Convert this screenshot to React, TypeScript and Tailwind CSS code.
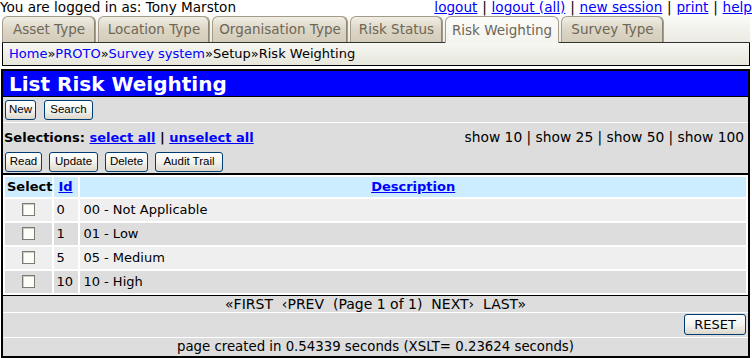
import React from "react";

const Btn = ({ label, w }: { label: string; w: string }) => (
  <div
    className={`${w} h-[20px] flex items-center justify-center rounded-[3px] border border-[#003c74] bg-gradient-to-b from-[#ffffff] via-[#f4f3ee] to-[#dcd8cc] text-[11.5px] text-black font-['Liberation_Sans',sans-serif]`}
  >
    {label}
  </div>
);

const Tab = ({ label, w, active }: { label: string; w: string; active?: boolean }) => (
  <div
    className={
      active
        ? `${w} h-[27px] -mb-[1px] flex items-center justify-center rounded-t-[6px] border border-b-0 border-[#a49c88] bg-gradient-to-b from-[#fbfbf8] to-[#f4f4ef] text-[#6e6656]`
        : `${w} h-[26px] flex items-center justify-center rounded-t-[6px] border border-b-0 border-[#a49c88] shadow-[inset_-1px_0_0_#8d8672] bg-gradient-to-b from-[#f1eee5] via-[#dcd6c6] to-[#d3ccb9] text-[#6e6656]`
    }
  >
    {label}
  </div>
);

const Chk = () => (
  <div className="mx-auto w-[13px] h-[13px] border border-[#7a7a72] bg-[#fcfcf8] shadow-[inset_1px_1px_0_#cfcfc8]" />
);

const Sep = () => <span className="px-[4.8px]">|</span>;

export default function App() {
  const rows = [
    { id: "0", d: "00 - Not Applicable" },
    { id: "1", d: "01 - Low" },
    { id: "5", d: "05 - Medium" },
    { id: "10", d: "10 - High" },
  ];
  return (
    <div className="w-[752px] h-[358px] overflow-hidden bg-white text-[13px] text-black font-['DejaVu_Sans',sans-serif]">
      <div className="h-[16px] leading-[15px] text-[13.6px] flex justify-between whitespace-pre">
        <span>You are logged in as: Tony Marston</span>
        <span>
          <a className="text-[#0000ff] underline">logout</a>
          <Sep />
          <a className="text-[#0000ff] underline">logout (all)</a>
          <Sep />
          <a className="text-[#0000ff] underline">new session</a>
          <Sep />
          <a className="text-[#0000ff] underline">print</a>
          <Sep />
          <a className="text-[#0000ff] underline">help</a>
        </span>
      </div>
      <div className="mx-[2px] h-[27px] flex items-end gap-[2px] border-b border-[#333] bg-gradient-to-b from-[#fafaf7] to-[#ebebe3] whitespace-nowrap text-[13.5px]">
        <Tab label="Asset Type" w="w-[94px]" />
        <Tab label="Location Type" w="w-[112px]" />
        <Tab label="Organisation Type" w="w-[136px]" />
        <Tab label="Risk Status" w="w-[93px]" />
        <Tab label="Risk Weighting" w="w-[114px]" active />
        <Tab label="Survey Type" w="w-[103px]" />
      </div>
      <div className="mx-[2px] h-[23px] flex items-center pl-[6px] border-x border-b border-black bg-gradient-to-b from-[#f7f7f3] to-[#e6e6dc] whitespace-nowrap">
        <span className="text-[#0000ff]">Home</span>»
        <span className="text-[#0000ff]">PROTO</span>»
        <span className="text-[#0000ff]">Survey system</span>»Setup»Risk Weighting
      </div>
      <div className="mt-[3px] ml-[1px] mr-[2px] border-2 border-black h-[289px] flex flex-col">
        <div className="h-[26px] bg-[#0000ff] border-b border-black flex items-center pl-[6px] text-white font-bold text-[20px] leading-none">
          List Risk Weighting
        </div>
        <div className="h-[26px] bg-[#dddddd] border-b border-white flex items-center gap-[8px] pl-[2px]">
          <Btn label="New" w="w-[31px]" />
          <Btn label="Search" w="w-[49px]" />
        </div>
        <div className="h-[52px] bg-[#dddddd] border-b-2 border-black flex flex-col pl-[1px] pr-[4px]">
          <div className="h-[15px] mt-[7px] flex justify-between items-center leading-[15px] whitespace-nowrap">
            <span className="font-bold">
              Selections: <a className="text-[#0000ff] underline">select all</a> |{" "}
              <a className="text-[#0000ff] underline">unselect all</a>
            </span>
            <span className="text-[13.8px]">show 10 | show 25 | show 50 | show 100</span>
          </div>
          <div className="mt-[7px] flex gap-[7px] pl-[1px]">
            <Btn label="Read" w="w-[37px]" />
            <Btn label="Update" w="w-[49px]" />
            <Btn label="Delete" w="w-[43px]" />
            <Btn label="Audit Trail" w="w-[68px]" />
          </div>
        </div>
        <table className="w-full border-separate border-spacing-[2px] bg-white">
          <thead>
            <tr className="h-[18px] bg-[#ccedff] font-bold">
              <th className="w-[47px] text-left pl-[2px] p-0 leading-[18px]">Select</th>
              <th className="w-[24px] text-left pl-[4px] p-0">
                <a className="text-[#0000ff] underline">Id</a>
              </th>
              <th className="p-0 text-center">
                <a className="text-[#0000ff] underline">Description</a>
              </th>
            </tr>
          </thead>
          <tbody>
            {rows.map((r, i) => (
              <tr key={r.id} className={`h-[22px] ${i % 2 === 0 ? "bg-[#efefef]" : "bg-[#dddddd]"}`}>
                <td className="p-0">
                  <Chk />
                </td>
                <td className="p-0 pl-[2px]">{r.id}</td>
                <td className="p-0 pl-[3px]">{r.d}</td>
              </tr>
            ))}
          </tbody>
        </table>
        <div className="h-[18px] bg-[#dddddd] border-t border-black border-b border-b-white flex items-center justify-center whitespace-pre leading-none text-[14px]">
          {"«FIRST  ‹PREV  (Page 1 of 1)  NEXT›  LAST»"}
        </div>
        <div className="h-[25px] bg-[#dddddd] border-b border-white flex items-center justify-end pr-[2px]">
          <div className="w-[62px] h-[21px] flex items-center justify-center rounded-[3px] border border-[#003c74] bg-gradient-to-b from-[#ffffff] via-[#f4f3ee] to-[#dcd8cc]">
            RESET
          </div>
        </div>
        <div className="flex-1 bg-[#dddddd] flex items-center justify-center whitespace-nowrap leading-none text-[13.3px]">
          page created in 0.54339 seconds (XSLT= 0.23624 seconds)
        </div>
      </div>
    </div>
  );
}
